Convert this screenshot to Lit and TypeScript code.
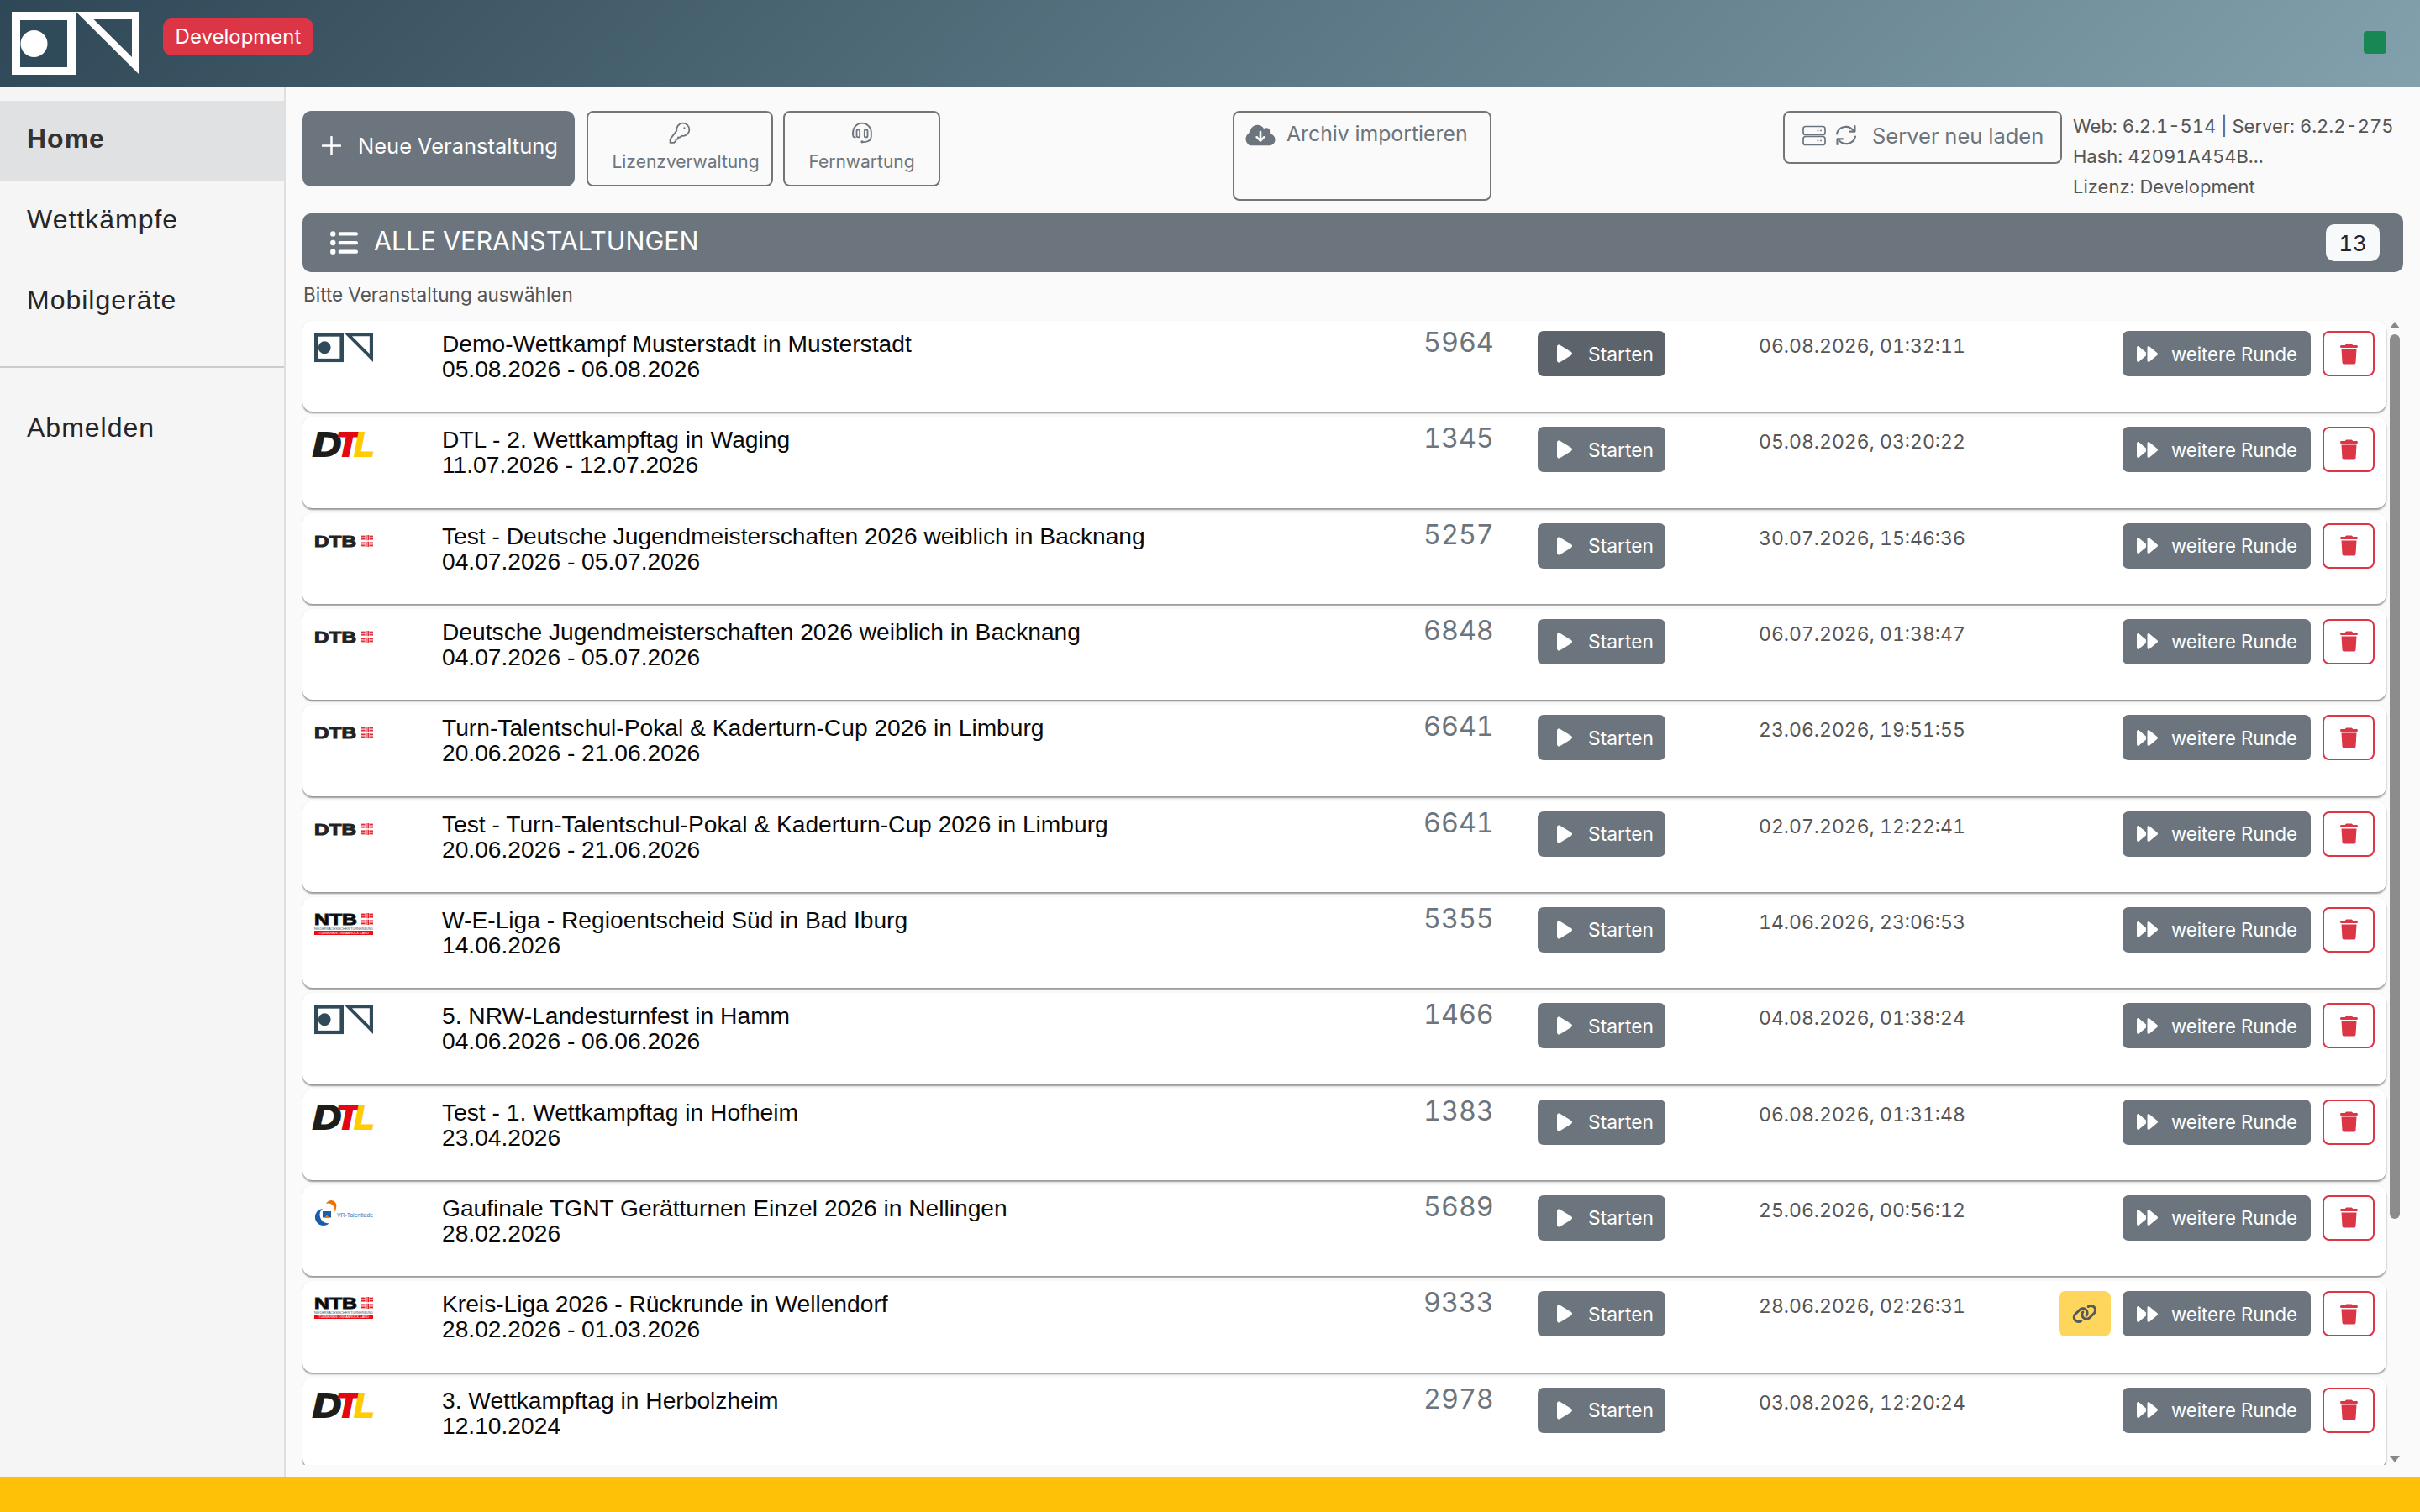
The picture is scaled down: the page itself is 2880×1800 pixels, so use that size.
import { LitElement, html, css, svg } from "lit";
import { customElement } from "lit/decorators.js";

type Logo = "on" | "dtl" | "dtb" | "ntb" | "vr";
interface Ev { logo: Logo; name: string; range: string; no: string; date: string; link?: boolean; hover?: boolean; }

const EVENTS: Ev[] = [
  { logo: "on", name: "Demo-Wettkampf Musterstadt in Musterstadt", range: "05.08.2026 - 06.08.2026", no: "5964", date: "06.08.2026, 01:32:11", hover: true },
  { logo: "dtl", name: "DTL - 2. Wettkampftag in Waging", range: "11.07.2026 - 12.07.2026", no: "1345", date: "05.08.2026, 03:20:22" },
  { logo: "dtb", name: "Test - Deutsche Jugendmeisterschaften 2026 weiblich in Backnang", range: "04.07.2026 - 05.07.2026", no: "5257", date: "30.07.2026, 15:46:36" },
  { logo: "dtb", name: "Deutsche Jugendmeisterschaften 2026 weiblich in Backnang", range: "04.07.2026 - 05.07.2026", no: "6848", date: "06.07.2026, 01:38:47" },
  { logo: "dtb", name: "Turn-Talentschul-Pokal & Kaderturn-Cup 2026 in Limburg", range: "20.06.2026 - 21.06.2026", no: "6641", date: "23.06.2026, 19:51:55" },
  { logo: "dtb", name: "Test - Turn-Talentschul-Pokal & Kaderturn-Cup 2026 in Limburg", range: "20.06.2026 - 21.06.2026", no: "6641", date: "02.07.2026, 12:22:41" },
  { logo: "ntb", name: "W-E-Liga - Regioentscheid Süd in Bad Iburg", range: "14.06.2026", no: "5355", date: "14.06.2026, 23:06:53" },
  { logo: "on", name: "5. NRW-Landesturnfest in Hamm", range: "04.06.2026 - 06.06.2026", no: "1466", date: "04.08.2026, 01:38:24" },
  { logo: "dtl", name: "Test - 1. Wettkampftag in Hofheim", range: "23.04.2026", no: "1383", date: "06.08.2026, 01:31:48" },
  { logo: "vr", name: "Gaufinale TGNT Gerätturnen Einzel 2026 in Nellingen", range: "28.02.2026", no: "5689", date: "25.06.2026, 00:56:12" },
  { logo: "ntb", name: "Kreis-Liga 2026 - Rückrunde in Wellendorf", range: "28.02.2026 - 01.03.2026", no: "9333", date: "28.06.2026, 02:26:31", link: true },
  { logo: "dtl", name: "3. Wettkampftag in Herbolzheim", range: "12.10.2024", no: "2978", date: "03.08.2026, 12:20:24" },
];

const onMark = (fill: string, hole: string) => svg`
  <rect x="0" y="0" width="76" height="75" fill="${fill}"/>
  <rect x="10" y="10" width="56" height="56" fill="${hole}"/>
  <ellipse cx="26.5" cy="38" rx="16" ry="16" fill="${fill}"/>
  <path fill-rule="evenodd" fill="${fill}" d="M76.5 0H152V75ZM97.5 9 143 54V9Z"/>`;

const emblem = (x: number, y: number, fill: string) => svg`
  <g fill="${fill}" transform="translate(${x} ${y})">
    <rect x="0" y="0.6" width="4.6" height="2"/><rect x="0" y="3.6" width="4.6" height="2"/>
    <rect x="9.4" y="0.6" width="4.6" height="2"/><rect x="9.4" y="3.6" width="4.6" height="2"/>
    <rect x="0" y="8.4" width="4.6" height="2"/><rect x="0" y="11.4" width="4.6" height="2"/>
    <rect x="9.4" y="8.4" width="4.6" height="2"/><rect x="9.4" y="11.4" width="4.6" height="2"/>
    <rect x="5" y="0" width="1.6" height="6.2"/><rect x="7.4" y="0" width="1.6" height="6.2"/>
    <rect x="5" y="7.8" width="1.6" height="6.2"/><rect x="7.4" y="7.8" width="1.6" height="6.2"/>
  </g>`;

function logo(kind: Logo) {
  if (kind === "on") {
    return html`<svg class="logo" viewBox="0 0 152 77" preserveAspectRatio="none">${onMark("#2f4a59", "#ffffff")}</svg>`;
  }
  if (kind === "dtl") {
    return html`<svg class="logo" viewBox="0 0 70 36">
      <g class="dtl">
        <text x="-2" y="32.5" textLength="34" lengthAdjust="spacingAndGlyphs" fill="#1d1d1b" stroke="#1d1d1b">D</text>
        <text x="26" y="32.5" textLength="27" lengthAdjust="spacingAndGlyphs" fill="#e30613" stroke="#e30613">T</text>
        <text x="47.5" y="32.5" textLength="24" lengthAdjust="spacingAndGlyphs" fill="#ffcc00" stroke="#ffcc00">L</text>
      </g></svg>`;
  }
  if (kind === "dtb") {
    return html`<svg class="logo" viewBox="0 0 70 36">
      <text class="dtb" x="0" y="26" textLength="50" lengthAdjust="spacingAndGlyphs" fill="#222">DTB</text>
      ${emblem(56, 12, "#e2323f")}</svg>`;
  }
  if (kind === "ntb") {
    return html`<svg class="logo" viewBox="0 0 70 36">
      <text class="dtb" x="0" y="19" textLength="51" lengthAdjust="spacingAndGlyphs" fill="#000">NTB</text>
      ${emblem(56, 5, "#e8202a")}
      <text class="tiny" x="0" y="24.5" textLength="70" lengthAdjust="spacingAndGlyphs" fill="#444">NIEDERSÄCHSISCHER TURNERBUND</text>
      <rect x="0" y="26" width="70" height="5" fill="#f00d12"/>
      <text class="tiny" x="5" y="30" textLength="60" lengthAdjust="spacingAndGlyphs" fill="#fff">TURNKREIS OSNABRÜCK LAND</text></svg>`;
  }
  return html`<svg class="logo" viewBox="0 0 70 36">
    <path d="M10 14A10 10 0 1 0 18 31A9 9 0 0 1 7 24A9 9 0 0 1 10 14Z" fill="#1a5ea8"/>
    <path d="M14 8A6.5 6.5 0 0 1 26 13A6 6 0 0 1 24 18A8 8 0 0 0 14 8Z" fill="#ee7203"/>
    <rect x="10" y="17" width="10" height="7.5" fill="#1a5ea8"/>
    <path d="M12.5 24.5H17.5L15 21Z" fill="#ee7203"/>
    <text class="vr" x="27" y="23.5" textLength="43" lengthAdjust="spacingAndGlyphs" fill="#3b73b9">VR-Talentiade</text></svg>`;
}

const ic = {
  play: html`<svg class="i-play" viewBox="0 0 384 512"><path d="M73 39c-14.8-9.1-33.4-9.4-48.5-.9S0 62.6 0 80V432c0 17.4 9.4 33.4 24.5 41.9s33.7 8.1 48.5-.9L361 297c14.3-8.7 23-24.2 23-41s-8.7-32.2-23-41L73 39z"/></svg>`,
  forward: html`<svg class="i-fwd" viewBox="0 0 512 512"><path d="M52.5 440.6c-9.5 7.9-22.8 9.7-34.1 4.4S0 428.4 0 416V96C0 83.6 7.2 72.3 18.4 67s24.5-3.6 34.1 4.4L224 214.3V256v41.7L52.5 440.6zM256 352V256 128 96c0-12.4 7.2-23.7 18.4-29s24.5-3.6 34.1 4.4l192 160c7.3 6.1 11.5 15.1 11.5 24.6s-4.2 18.5-11.5 24.6l-192 160c-9.5 7.9-22.8 9.7-34.1 4.4s-18.4-16.6-18.4-29V352z"/></svg>`,
  trash: html`<svg class="i-trash" viewBox="0 0 448 512"><path d="M135.2 17.7L128 32H32C14.3 32 0 46.3 0 64S14.3 96 32 96H416c17.7 0 32-14.3 32-32s-14.3-32-32-32H320l-7.2-14.3C307.4 6.8 296.3 0 284.2 0H163.8c-12.1 0-23.2 6.8-28.6 17.7zM416 128H32L53.2 467c1.6 25.3 22.6 45 47.9 45H346.9c25.3 0 46.3-19.7 47.9-45L416 128z"/></svg>`,
  link: html`<svg class="i-link" viewBox="0 0 640 512"><path d="M579.8 267.7c56.5-56.5 56.5-148 0-204.5c-50-50-128.8-56.5-186.3-15.4l-1.6 1.1c-14.4 10.3-17.7 30.3-7.4 44.6s30.3 17.7 44.6 7.4l1.6-1.1c32.1-22.9 76-19.3 103.8 8.6c31.5 31.5 31.5 82.5 0 114L422.3 334.8c-31.5 31.5-82.5 31.5-114 0c-27.9-27.9-31.5-71.8-8.6-103.8l1.1-1.6c10.3-14.4 6.9-34.4-7.4-44.6s-34.4-6.9-44.6 7.4l-1.1 1.6C206.5 251.2 213 330 263 380c56.5 56.5 148 56.5 204.5 0L579.8 267.7zM60.2 244.3c-56.5 56.5-56.5 148 0 204.5c50 50 128.8 56.5 186.3 15.4l1.6-1.1c14.4-10.3 17.7-30.3 7.4-44.6s-30.3-17.7-44.6-7.4l-1.6 1.1c-32.1 22.9-76 19.3-103.8-8.6C74 372 74 321 105.5 289.5L217.7 177.2c31.5-31.5 82.5-31.5 114 0c27.9 27.9 31.5 71.8 8.6 103.9l-1.1 1.6c-10.3 14.4-6.9 34.4 7.4 44.6s34.4 6.9 44.6-7.4l1.1-1.6C433.5 260.8 427 182 377 132c-56.5-56.5-148-56.5-204.5 0L60.2 244.3z"/></svg>`,
  cloud: html`<svg class="i-cloud" viewBox="0 0 640 512"><path d="M144 480C64.5 480 0 415.5 0 336c0-62.8 40.2-116.2 96.2-135.9c-.1-2.7-.2-5.4-.2-8.1c0-88.4 71.6-160 160-160c59.3 0 111 32.2 138.7 80.2C409.9 102 428.3 96 448 96c53 0 96 43 96 96c0 12.2-2.3 23.8-6.4 34.6C596 238.4 640 290.1 640 352c0 70.7-57.3 128-128 128H144zm79-167l80 80c9.4 9.4 24.6 9.4 33.9 0l80-80c9.4-9.4 9.4-24.6 0-33.9s-24.6-9.4-33.9 0l-39 39V184c0-13.3-10.7-24-24-24s-24 10.7-24 24V318.1l-39-39c-9.4-9.4-24.6-9.4-33.9 0s-9.4 24.6 0 33.9z"/></svg>`,
  list: html`<svg class="i-list" viewBox="0 0 512 512"><path d="M64 144a48 48 0 1 0 0-96 48 48 0 1 0 0 96zM192 64c-17.7 0-32 14.3-32 32s14.3 32 32 32H480c17.7 0 32-14.3 32-32s-14.3-32-32-32H192zm0 160c-17.7 0-32 14.3-32 32s14.3 32 32 32H480c17.7 0 32-14.3 32-32s-14.3-32-32-32H192zm0 160c-17.7 0-32 14.3-32 32s14.3 32 32 32H480c17.7 0 32-14.3 32-32s-14.3-32-32-32H192zM64 304a48 48 0 1 0 0-96 48 48 0 1 0 0 96zm48 112a48 48 0 1 0-96 0 48 48 0 1 0 96 0z"/></svg>`,
  plus: html`<svg class="i-plus" viewBox="0 0 24 24"><path d="M12 1V23M1 12H23" fill="none" stroke="#fff" stroke-width="2.6" stroke-linecap="round"/></svg>`,
  key: html`<svg class="i-key" viewBox="0 0 24 24" fill="none" stroke="currentColor" stroke-width="1.7" stroke-linejoin="round" stroke-linecap="round">
    <path d="M8.6 9.8A7 7 0 1 1 14.2 15.4L12 17.2 10.2 17.1 10 19 8 19.1 7.6 21.2 5.4 23H1.5L1.4 19.2Z"/><circle cx="17" cy="6.8" r="1" fill="currentColor" stroke="none"/></svg>`,
  headset: html`<svg class="i-head" viewBox="0 0 24 24" fill="none" stroke="currentColor" stroke-width="1.7" stroke-linecap="round">
    <path d="M2 14V11.5A10 10 0 0 1 22 11.5V16C22 20 19 21.8 15 22.2H13"/>
    <rect x="6" y="8.5" width="3.4" height="8.5" rx="1.6"/><rect x="14.6" y="8.5" width="3.4" height="8.5" rx="1.6"/>
    <path d="M2 11.5V15C2 16 3 17 4.4 17"/><circle cx="12" cy="22" r="1.5" fill="currentColor" stroke="none"/></svg>`,
  server: html`<svg class="i-server" viewBox="0 0 28 24" fill="none" stroke="currentColor" stroke-width="1.7">
    <rect x="1" y="1" width="26" height="10" rx="2.8"/><rect x="1" y="13" width="26" height="10" rx="2.8"/>
    <path d="M18.5 5.2V6.8M22 5.2V6.8M18.5 17.2V18.8M22 17.2V18.8"/></svg>`,
  sync: html`<svg class="i-sync" viewBox="0 0 26 26" fill="none" stroke="currentColor" stroke-width="2.1" stroke-linecap="round" stroke-linejoin="round">
    <path d="M2 11.5A11 11 0 0 1 22 8"/><path d="M23.5 2V8.6H17"/>
    <path d="M24 14.5A11 11 0 0 1 4 18"/><path d="M2.5 24V17.4H9"/></svg>`,
};

@customElement("app-root")
export class AppRoot extends LitElement {
  static styles = css`
    :host { display: flex; flex-direction: column; width: 2880px; height: 1800px; overflow: hidden; background: #fafafa;
      font-family: Inter, "Liberation Sans", sans-serif; font-variant-numeric: tabular-nums; color: #212529; }
    .top { height: 104px; flex: none; display: flex; align-items: flex-start; background: linear-gradient(135deg, #2f4857 0%, #83a0ad 100%); }
    .brand { width: 152px; height: 75px; margin: 14px 0 0 14px; flex: none; }
    .env { margin: 22px 0 0 28px; height: 44px; width: 179px; border-radius: 10px; background: #dc3545; color: #fff; font-size: 24px;
      display: flex; align-items: center; justify-content: center; box-sizing: border-box; padding-bottom: 2px; }
    .led { width: 27px; height: 27px; margin: 37px 40px 0 auto; background: #198754; border-radius: 4px; }
    .body { flex: 1; min-height: 0; display: flex; }
    .side { width: 340px; flex: none; box-sizing: border-box; background: #f5f5f5; border-right: 2px solid #dfdfdf; padding-top: 16px; }
    .nav { height: 96px; display: flex; align-items: center; padding: 0 0 6px 32px; box-sizing: border-box;
      font: 32px "Liberation Sans", sans-serif; letter-spacing: 1px; color: #262626; }
    .nav.on { background: #e0e1e3; font-weight: 700; color: #333; }
    .rule { height: 2px; background: #cccccc; margin: 28px 0 26px; }
    .main { flex: 1; min-width: 0; padding: 28px 20px 14px 20px; display: flex; flex-direction: column; box-sizing: border-box; }
    .tools { display: flex; align-items: flex-start; height: 122px; flex: none; }
    .tools > * { flex: none; }
    .btn-main { width: 324px; height: 90px; box-sizing: border-box; background: #6c757d; color: #fff; border-radius: 10px; padding: 0 0 8px 23px;
      display: flex; align-items: center; font-size: 25.5px; white-space: nowrap; }
    .i-plus { width: 23px; height: 23px; margin-right: 20px; flex: none; }
    .outline { border: 2.5px solid #757575; border-radius: 8px; box-sizing: border-box; color: #6c757d; background: transparent; white-space: nowrap; }
    .stack { height: 90px; display: flex; flex-direction: column; align-items: center; font-size: 21px; padding-top: 11px; }
    .stack span { margin-top: 9px; }
    .lic { width: 222px; margin-left: 14px; padding-left: 14px; }
    .lic .i-key { margin-right: 14px; }
    .rem { width: 187px; margin-left: 12px; }
    .i-key, .i-head { width: 26px; height: 26px; display: block; flex: none; }
    .arch { width: 308px; height: 107px; margin-left: 348px; display: flex; align-items: flex-start; padding: 10px 0 0 13px; font-size: 24.8px; }
    .i-cloud { width: 36px; height: 28px; fill: #6c757d; margin: 3px 13px 0 0; flex: none; }
    .reload { width: 332px; height: 63px; margin-left: 347px; display: flex; align-items: center; padding: 0 0 5px 21px; font-size: 25.5px; }
    .i-server { width: 28px; height: 25px; flex: none; }
    .i-sync { width: 26px; height: 26px; margin: 0 18px 0 11px; flex: none; }
    .info { margin-left: 13px; font-size: 22px; line-height: 36px; color: #555; white-space: nowrap; }
    .section { height: 70px; flex: none; background: #6c757d; border-radius: 10px; color: #fff; display: flex; align-items: center; padding: 0 28px 0 32px; font-size: 30.5px; }
    .i-list { width: 34px; height: 34px; fill: #fff; margin-right: 19px; flex: none; }
    .section .ttl { padding-bottom: 6px; }
    .count { margin-left: auto; width: 64px; height: 44px; background: #f8f9fa; color: #212529; border-radius: 10px; font-size: 26px; display: flex; align-items: center; justify-content: center; }
    .hint { flex: none; height: 56px; display: flex; align-items: center; font-size: 22.5px; color: #555; padding: 0 0 4px 1px; box-sizing: border-box; }
    .listwrap { flex: 1; min-height: 0; position: relative; }
    .list { height: 100%; overflow: hidden; padding: 2px 20px 0 0; box-sizing: border-box; }
    .thumb { position: absolute; left: 2484px; top: 18px; width: 12px; height: 1053px; border-radius: 6px; background: #8c8c8c; }
    .arrow { position: absolute; left: 2484px; width: 12px; height: 8px; fill: #888; display: block; }
    .arrow.up { top: 3px; }
    .arrow.down { bottom: 3px; }
    .row { height: 108.33px; margin-bottom: 6px; box-sizing: border-box; background: #fff; border-radius: 12px;
      box-shadow: 0 2px 2px rgba(0,0,0,.4), 0 0 2px rgba(0,0,0,.04);
      display: grid; grid-template-columns: 152px 1168px 136px 263px 1fr auto; padding: 12px 14px 0 14px; align-items: start; }
    .logo { width: 70px; height: 36px; display: block; margin-top: 2px; overflow: visible; }
    .dtl text { font: italic 700 41px "Liberation Sans", sans-serif; stroke-width: 2; }
    .dtb { font: 700 19px "Liberation Sans", sans-serif; stroke: currentColor; }
    .tiny { font: 400 3.6px "Liberation Sans", sans-serif; }
    .vr { font: 400 7.5px "Liberation Sans", sans-serif; }
    .name { font: 28.2px/30px "Liberation Sans", sans-serif; color: #0a0a0a; white-space: nowrap; margin-top: 0; }
    .no { font-size: 32.3px; line-height: 40px; color: #6c757d; margin-top: -6px; }
    .btn { height: 54px; box-sizing: border-box; background: #6c757d; color: #fff; border-radius: 7px; display: flex; align-items: center; font-size: 22.8px; white-space: nowrap; }
    .start { width: 152px; padding-left: 22px; }
    .start.hover { background: #5c636a; }
    .i-play { width: 20px; height: 24px; fill: #fff; margin-right: 18px; flex: none; }
    .date { font-size: 23px; line-height: 30px; color: #555; margin-top: 3px; white-space: nowrap; }
    .acts { display: flex; justify-content: flex-end; gap: 14px; }
    .more { width: 224px; padding-left: 17px; font-size: 22.2px; }
    .i-fwd { width: 25px; height: 25px; fill: #fff; margin-right: 16px; flex: none; }
    .del { width: 62px; height: 54px; box-sizing: border-box; border: 2.5px solid #dc3545; border-radius: 8px; display: flex; align-items: center; justify-content: center; }
    .i-trash { width: 21px; height: 25px; fill: #dc3545; }
    .lnk { width: 62px; height: 54px; background: #ffd65c; border-radius: 8px; display: flex; align-items: center; justify-content: center; }
    .i-link { width: 30px; height: 24px; fill: #55585c; }
    .foot { height: 42px; flex: none; background: #ffc107; }
  `;

  render() {
    return html`
      <div class="top">
        <svg class="brand" viewBox="0 0 152 75">${onMark("#ffffff", "#2f4a59")}</svg>
        <div class="env">Development</div>
        <div class="led"></div>
      </div>
      <div class="body">
        <aside class="side">
          <div class="nav on">Home</div>
          <div class="nav">Wettkämpfe</div>
          <div class="nav">Mobilgeräte</div>
          <div class="rule"></div>
          <div class="nav">Abmelden</div>
        </aside>
        <main class="main">
          <div class="tools">
            <div class="btn-main">${ic.plus}<span>Neue Veranstaltung</span></div>
            <div class="outline stack lic">${ic.key}<span>Lizenzverwaltung</span></div>
            <div class="outline stack rem">${ic.headset}<span>Fernwartung</span></div>
            <div class="outline arch">${ic.cloud}<span>Archiv importieren</span></div>
            <div class="outline reload">${ic.server}${ic.sync}<span>Server neu laden</span></div>
            <div class="info">Web: 6.2.1-514 | Server: 6.2.2-275<br />Hash: 42091A454B...<br />Lizenz: Development</div>
          </div>
          <div class="section">${ic.list}<span class="ttl">ALLE VERANSTALTUNGEN</span><span class="count">13</span></div>
          <div class="hint">Bitte Veranstaltung auswählen</div>
          <div class="listwrap">
            <div class="list">
              ${EVENTS.map((e) => html`
                <div class="row">
                  ${logo(e.logo)}
                  <div class="name">${e.name}<br />${e.range}</div>
                  <div class="no">${e.no}</div>
                  <div class="btn start ${e.hover ? "hover" : ""}">${ic.play}<span>Starten</span></div>
                  <div class="date">${e.date}</div>
                  <div class="acts">
                    ${e.link ? html`<div class="lnk">${ic.link}</div>` : ""}
                    <div class="btn more">${ic.forward}<span>weitere Runde</span></div>
                    <div class="del">${ic.trash}</div>
                  </div>
                </div>`)}
            </div>
            <svg class="arrow up" viewBox="0 0 12 8"><path d="M6 0L12 8H0Z"/></svg>
            <div class="thumb"></div>
            <svg class="arrow down" viewBox="0 0 12 8"><path d="M0 0H12L6 8Z"/></svg>
          </div>
        </main>
      </div>
      <div class="foot"></div>
    `;
  }
}
